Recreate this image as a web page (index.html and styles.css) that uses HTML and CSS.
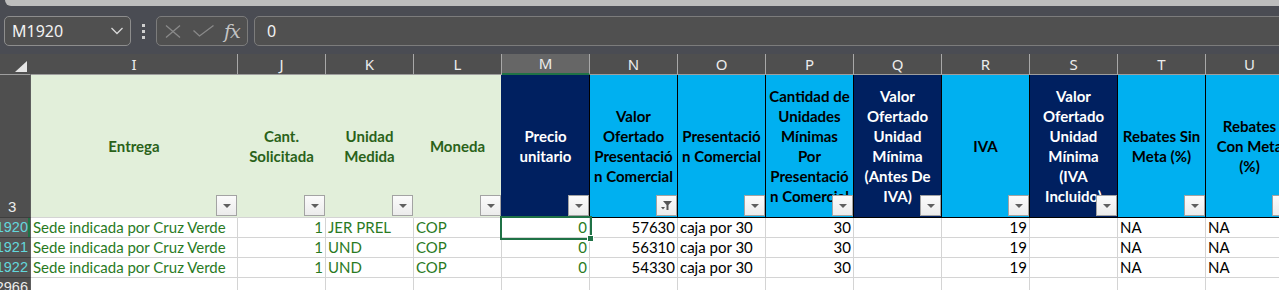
FILE: index.html
```html
<!DOCTYPE html>
<html lang="es">
<head>
<meta charset="utf-8">
<title>Hoja</title>
<link rel="stylesheet" href="styles.css">
</head>
<body>
<div class="topbar"></div>
<div class="toolbar">
  <div class="namebox"><span>M1920</span><svg width="12" height="8" viewBox="0 0 12 8"><polyline points="0.5,1 6,6.5 11.5,1" fill="none" stroke="#d8d8d8" stroke-width="1.3"/></svg></div>
  <div class="dots"><i></i><i></i><i></i></div>
  <div class="fxbox">
    <svg class="ic-x" width="16" height="13" viewBox="0 0 16 13"><path d="M1 0.5 L15 12.5 M15 0.5 L1 12.5" stroke="#8a8a8a" stroke-width="1.3" fill="none"/></svg>
    <svg class="ic-ok" width="21" height="12" viewBox="0 0 21 12"><polyline points="0.5,5.5 6.5,11 20.5,0.5" stroke="#8a8a8a" stroke-width="1.3" fill="none"/></svg>
    <span class="fx">fx</span>
  </div>
  <div class="formula">0</div>
</div>
<div class="sheet">
  <div class="ch corner"><svg width="31" height="20" viewBox="0 0 31 20"><polygon points="15,18 27,18 27,7" fill="#e6e6e6"/></svg></div>
  <div class="ch">I</div>
  <div class="ch">J</div>
  <div class="ch">K</div>
  <div class="ch">L</div>
  <div class="ch active">M</div>
  <div class="ch">N</div>
  <div class="ch">O</div>
  <div class="ch">P</div>
  <div class="ch">Q</div>
  <div class="ch">R</div>
  <div class="ch">S</div>
  <div class="ch">T</div>
  <div class="ch">U</div>

  <div class="rn head">3</div>
  <div class="h g"><span>Entrega</span><i class="fb"></i></div>
  <div class="h g"><span>Cant.<br>Solicitada</span><i class="fb"></i></div>
  <div class="h g"><span>Unidad<br>Medida</span><i class="fb"></i></div>
  <div class="h g last"><span>Moneda</span><i class="fb"></i></div>
  <div class="h n"><span>Precio<br>unitario</span><i class="fb"></i></div>
  <div class="h b"><span>Valor<br>Ofertado<br>Presentació<br>n Comercial</span><i class="fb filt"><svg width="19" height="19" viewBox="0 0 19 19"><polygon points="6,5 15,5 11.5,9 11.5,14 9.5,14 9.5,9" fill="#555"/><polygon points="4,11 8,11 6,13.5" fill="#555"/></svg></i></div>
  <div class="h b"><span>Presentació<br>n Comercial</span><i class="fb"></i></div>
  <div class="h b"><span>Cantidad de<br>Unidades<br>Mínimas<br>Por<br>Presentació<br>n Comercial</span><i class="fb"></i></div>
  <div class="h n"><span>Valor<br>Ofertado<br>Unidad<br>Mínima<br>(Antes De<br>IVA)</span><i class="fb"></i></div>
  <div class="h b"><span>IVA</span><i class="fb"></i></div>
  <div class="h n"><span>Valor<br>Ofertado<br>Unidad<br>Mínima<br>(IVA<br>Incluido)</span><i class="fb"></i></div>
  <div class="h b"><span>Rebates Sin<br>Meta (%)</span><i class="fb"></i></div>
  <div class="h b"><span>Rebates<br>Con Meta<br>(%)</span><i class="fb"></i></div>

  <div class="rn sel">1920</div>
  <div class="d gt">Sede indicada por Cruz Verde</div>
  <div class="d gt r">1</div>
  <div class="d gt">JER PREL</div>
  <div class="d gt">COP</div>
  <div class="d gt r cur">0</div>
  <div class="d r">57630</div>
  <div class="d">caja por 30</div>
  <div class="d r">30</div>
  <div class="d"></div>
  <div class="d r">19</div>
  <div class="d"></div>
  <div class="d">NA</div>
  <div class="d">NA</div>

  <div class="rn">1921</div>
  <div class="d gt">Sede indicada por Cruz Verde</div>
  <div class="d gt r">1</div>
  <div class="d gt">UND</div>
  <div class="d gt">COP</div>
  <div class="d gt r">0</div>
  <div class="d r">56310</div>
  <div class="d">caja por 30</div>
  <div class="d r">30</div>
  <div class="d"></div>
  <div class="d r">19</div>
  <div class="d"></div>
  <div class="d">NA</div>
  <div class="d">NA</div>

  <div class="rn">1922</div>
  <div class="d gt">Sede indicada por Cruz Verde</div>
  <div class="d gt r">1</div>
  <div class="d gt">UND</div>
  <div class="d gt">COP</div>
  <div class="d gt r">0</div>
  <div class="d r">54330</div>
  <div class="d">caja por 30</div>
  <div class="d r">30</div>
  <div class="d"></div>
  <div class="d r">19</div>
  <div class="d"></div>
  <div class="d">NA</div>
  <div class="d">NA</div>

  <div class="rn plain">2966</div>
  <div class="d"></div>
  <div class="d"></div>
  <div class="d"></div>
  <div class="d"></div>
  <div class="d"></div>
  <div class="d"></div>
  <div class="d"></div>
  <div class="d"></div>
  <div class="d"></div>
  <div class="d"></div>
  <div class="d"></div>
  <div class="d"></div>
  <div class="d"></div>
</div>
</body>
</html>
```
FILE: styles.css
```css
html, body {
  margin: 0;
  padding: 0;
}
body {
  width: 1279px;
  height: 290px;
  overflow: hidden;
  background: #4a4c53;
  font-family: "Lato", "Liberation Sans", sans-serif;
}
.topbar {
  height: 6px;
  margin-left: 5px;
  background: #bdbdbd;
  border-bottom-left-radius: 8px;
}
.toolbar {
  height: 48px;
  box-sizing: border-box;
  padding: 10px 0 8px 4px;
  display: flex;
  align-items: stretch;
}
.namebox {
  width: 127px;
  box-sizing: border-box;
  border: 1px solid #8d8d8d;
  border-radius: 5px;
  background: #505050;
  display: flex;
  align-items: center;
  justify-content: space-between;
  padding: 0 7px 0 7px;
  color: #f2f2f2;
  font-family: "Noto Sans", "Liberation Sans", sans-serif;
  font-size: 16px;
}
.dots {
  width: 3px;
  margin-left: 11px;
  display: flex;
  flex-direction: column;
  justify-content: center;
  gap: 3px;
}
.dots i {
  display: block;
  width: 3px;
  height: 3px;
  background: #cfcfcf;
}
.fxbox {
  width: 92px;
  margin-left: 11px;
  box-sizing: border-box;
  border: 1px solid #7c7c7c;
  border-radius: 5px;
  background: #505050;
  display: flex;
  align-items: center;
  padding-left: 8px;
}
.ic-ok {
  margin-left: 12px;
}
.fx {
  margin-left: 10px;
  font-family: "DejaVu Serif", "Liberation Serif", serif;
  font-style: italic;
  font-size: 19px;
  line-height: 20px;
  color: #c4c4c4;
  letter-spacing: -1px;
}
.formula {
  flex: 1;
  margin-left: 6px;
  margin-right: -10px;
  box-sizing: border-box;
  border: 1px solid #7c7c7c;
  border-radius: 5px;
  background: #505050;
  color: #f2f2f2;
  font-family: "Noto Sans", "Liberation Sans", sans-serif;
  font-size: 16px;
  display: flex;
  align-items: center;
  padding-left: 12px;
}
.sheet {
  display: grid;
  grid-template-columns: 31px 207px repeat(12, 88px);
  grid-template-rows: 21px 143px 20px 20px 20px 20px;
  width: 1294px;
}
.sheet > div {
  box-sizing: border-box;
  border-right: 1px solid #d4d4d4;
  border-bottom: 1px solid #d4d4d4;
  overflow: hidden;
  white-space: nowrap;
}
.sheet > .ch {
  background: #4f4f4f;
  border-right-color: #a8a8a8;
  border-bottom-color: #9e9e9e;
  color: #ececec;
  font-family: "Noto Sans", "Liberation Sans", sans-serif;
  font-size: 15px;
  line-height: 20px;
  text-align: center;
}
.sheet > .ch.corner {
  border-right-color: #4f4f4f;
}
.ch.corner svg {
  display: block;
}
.sheet > .ch.active {
  background: #666666;
  border-bottom: 2px solid #1f7246;
  line-height: 19px;
}
.sheet > .rn {
  background: #545454;
  border-right-color: #5e5e5e;
  border-bottom-color: #3e3e3e;
  color: #63d8dc;
  font-family: "Liberation Sans", "Noto Sans", sans-serif;
  font-size: 14.5px;
  line-height: 19px;
  padding-right: 2px;
  overflow: hidden;
  display: flex;
  justify-content: flex-end;
}
.sheet > .rn.head {
  background: #4f4f4f;
  color: #ececec;
  align-items: flex-end;
  justify-content: flex-start;
  padding-left: 8px;
  line-height: 20px;
  font-size: 15px;
}
.sheet > .rn.sel {
  background: #5c5c5c;
  box-shadow: inset -2px 0 0 #1f7246;
}
.sheet > .rn.plain {
  color: #ececec;
  background: #4f4f4f;
}
.sheet > .h {
  position: relative;
  display: flex;
  align-items: center;
  justify-content: center;
  text-align: center;
  font-weight: 700;
  font-size: 15px;
  line-height: 20px;
}
.h span {
  display: block;
}
.sheet > .g {
  background: #e2efda;
  color: #2a6219;
  border-right-color: #e2efda;
  border-bottom-color: #d4d4d4;
}
.sheet > .g.last {
  border-right-color: #002060;
}
.sheet > .b {
  background: #00b0f0;
  color: #000;
  border-right-color: #000;
  border-bottom-color: #000;
}
.sheet > .n {
  background: #002060;
  color: #fff;
  border-right-color: #000;
  border-bottom-color: #000;
}
.fb {
  position: absolute;
  right: 0;
  bottom: 1px;
  width: 21px;
  height: 21px;
  box-sizing: border-box;
  border: 1px solid #a3a3a3;
  background: linear-gradient(#fbfbfb, #ececec);
  z-index: 1;
}
.fb::after {
  content: "";
  position: absolute;
  left: 6px;
  top: 8px;
  border-left: 4px solid transparent;
  border-right: 4px solid transparent;
  border-top: 4px solid #5f5f5f;
}
.fb.filt::after {
  display: none;
}
.fb svg {
  display: block;
}
.sheet > .d {
  background: #fff;
  font-size: 15px;
  line-height: 19px;
  padding: 0 2px 0 2px;
  color: #000;
}
.sheet > .d.gt {
  color: #2a7a1f;
}
.sheet > .d.r {
  text-align: right;
}
.sheet > .d.cur {
  position: relative;
  overflow: visible;
}
.d.cur::after {
  content: "";
  position: absolute;
  left: -2px;
  top: -2px;
  right: -3px;
  bottom: -3px;
  border: 2px solid #1f7246;
  z-index: 2;
}
.d.cur::before {
  content: "";
  position: absolute;
  right: -5px;
  bottom: -5px;
  width: 5px;
  height: 5px;
  background: #1f7246;
  border: 1px solid #fff;
  z-index: 3;
}
```
